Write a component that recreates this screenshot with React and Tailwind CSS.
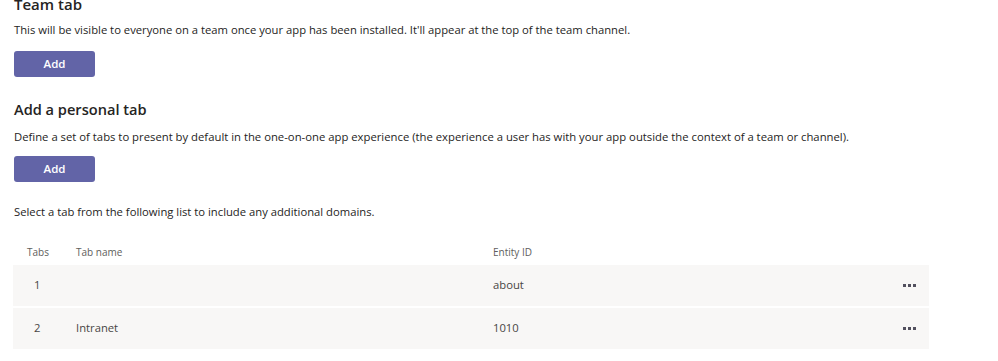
export default function App() {
  const rows = [
    { n: 1, name: "", id: "about" },
    { n: 2, name: "Intranet", id: "1010" },
  ];

  return (
    <div
      className="w-[998px] h-[361px] overflow-hidden bg-white text-[#252423]"
      style={{ fontFamily: '"Open Sans", "Noto Sans", sans-serif' }}
    >
      <div className="pl-[14px] -mt-[6px]">
        <h2 className="text-[15px] leading-[20px] font-semibold">Team tab</h2>
        <p className="mt-[8px] text-[11.25px] leading-[16px]">
          This will be visible to everyone on a team once your app has been installed. It'll appear at the top of the team channel.
        </p>
        <button className="mt-[13px] w-[81px] h-[26px] rounded-[3px] bg-[#6264a7] text-white text-[11.5px] font-semibold">
          Add
        </button>

        <h2 className="mt-[20px] text-[14.6px] leading-[24px] font-semibold">Add a personal tab</h2>
        <p className="mt-[8px] text-[11.3px] leading-[16px]">
          Define a set of tabs to present by default in the one-on-one app experience (the experience a user has with your app outside the context of a team or channel).
        </p>
        <button className="mt-[11px] w-[81px] h-[26px] rounded-[3px] bg-[#6264a7] text-white text-[11.5px] font-semibold">
          Add
        </button>

        <p className="mt-[22px] text-[11.25px] leading-[16px]">
          Select a tab from the following list to include any additional domains.
        </p>
      </div>

      <div className="ml-[13px] w-[916px] mt-[20px]">
        <div className="flex h-[25px] items-center text-[10px] text-[#605e5c]">
          <div className="w-[63px] pl-[14px]">Tabs</div>
          <div className="w-[417px]">Tab name</div>
          <div className="flex-1">Entity ID</div>
        </div>
        <div className="flex flex-col gap-[2px]">
          {rows.map((r) => (
            <div key={r.n} className="flex h-[41px] items-center bg-[#f8f7f6] text-[11.25px] text-[#484644]">
              <div className="w-[63px] pl-[21px]">{r.n}</div>
              <div className="w-[417px]">{r.name}</div>
              <div className="flex-1">{r.id}</div>
              <div className="w-[26px] flex items-center gap-[2.5px]">
                <span className="w-[2.5px] h-[2.5px] bg-[#52505e]" />
                <span className="w-[2.5px] h-[2.5px] bg-[#52505e]" />
                <span className="w-[2.5px] h-[2.5px] bg-[#52505e]" />
              </div>
            </div>
          ))}
        </div>
      </div>
    </div>
  );
}
